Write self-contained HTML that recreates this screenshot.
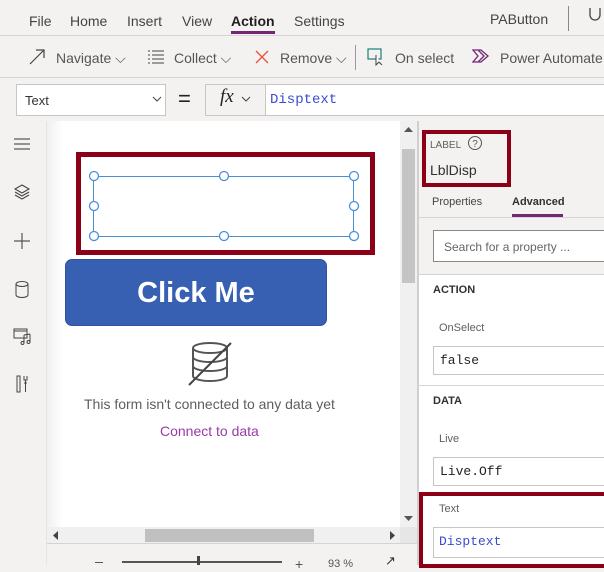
<!DOCTYPE html>
<html><head><style>
*{margin:0;padding:0;box-sizing:border-box}
body{width:604px;height:565px;overflow:hidden;background:#f3f2f1;font-family:"Liberation Sans",sans-serif;position:relative;color:#323130}
.a{position:absolute}
.t{font-size:14px;white-space:nowrap}
.mono{font-family:"Liberation Mono",monospace;font-size:13px}
</style></head><body>
<!-- menu -->
<div class="a" style="left:0;top:0;width:604px;height:36px;background:#f3f2f1;border-bottom:1px solid #d6d4d2"></div>
<div class="a t" style="left:29px;top:13px;color:#444">File</div>
<div class="a t" style="left:70px;top:13px;color:#444">Home</div>
<div class="a t" style="left:127px;top:13px;color:#444">Insert</div>
<div class="a t" style="left:182px;top:13px;color:#444">View</div>
<div class="a t" style="left:231px;top:13px;font-weight:bold;color:#201f1e">Action</div>
<div class="a" style="left:231px;top:31px;width:44px;height:3px;background:#742774"></div>
<div class="a t" style="left:294px;top:13px;color:#444">Settings</div>
<div class="a t" style="left:490px;top:11px;color:#444">PAButton</div>
<div class="a" style="left:568px;top:6px;width:1px;height:25px;background:#888"></div>
<svg class="a" style="left:586px;top:6px" width="20" height="24"><path d="M4 2 v7 a5 5 0 0 0 10 0 v-7" fill="none" stroke="#444" stroke-width="1.3"/></svg>
<!-- toolbar -->
<div class="a" style="left:0;top:37px;width:604px;height:41px;background:#f3f2f1;border-bottom:1px solid #d6d4d2"></div>
<svg class="a" style="left:28px;top:48px" width="18" height="18"><path d="M2 16 L16 2 M8 2 H16 V10" fill="none" stroke="#444" stroke-width="1.2"/></svg>
<div class="a t" style="left:56px;top:50px;color:#555">Navigate ⌵</div>
<svg class="a" style="left:148px;top:50px" width="16" height="14"><path d="M0 1h2M4 1h12M0 5h2M4 5h12M0 9h2M4 9h12M0 13h2M4 13h12" stroke="#444" stroke-width="1"/></svg>
<div class="a t" style="left:174px;top:50px;color:#555">Collect ⌵</div>
<svg class="a" style="left:255px;top:50px" width="14" height="14"><path d="M1 1L13 13M13 1L1 13" stroke="#e8523a" stroke-width="1.3"/></svg>
<div class="a t" style="left:280px;top:50px;color:#555">Remove ⌵</div>
<div class="a" style="left:355px;top:45px;width:1px;height:25px;background:#999"></div>
<svg class="a" style="left:367px;top:48px" width="20" height="18"><rect x="1" y="1" width="13" height="10" fill="none" stroke="#1a7f7a" stroke-width="1.2"/><path d="M9 7 l0 10 l3-3 l3 3" fill="#fff" stroke="#444" stroke-width="1"/></svg>
<div class="a t" style="left:395px;top:50px;color:#555">On select</div>
<svg class="a" style="left:472px;top:49px" width="18" height="14"><path d="M1 1h8l7 6-7 6H1l5-6z M6 1l6 6-6 6" fill="none" stroke="#742774" stroke-width="1.3"/></svg>
<div class="a t" style="left:500px;top:50px;color:#555">Power Automate</div>
<!-- formula bar -->
<div class="a" style="left:16px;top:84px;width:150px;height:32px;background:#fff;border:1px solid #c8c6c4"></div>
<div class="a" style="left:25px;top:93px;font-size:13px;color:#333">Text</div>
<svg class="a" style="left:152px;top:96px" width="10" height="6"><path d="M1 1l4 4 4-4" fill="none" stroke="#444"/></svg>
<div class="a" style="left:178px;top:86px;font-size:22px;color:#222">=</div>
<div class="a" style="left:205px;top:84px;width:61px;height:32px;background:#f3f2f1;border:1px solid #c8c6c4"></div>
<div class="a" style="left:220px;top:86px;font-family:'Liberation Serif',serif;font-style:italic;font-size:19px;color:#222">fx</div>
<svg class="a" style="left:241px;top:96px" width="10" height="6"><path d="M1 1l4 4 4-4" fill="none" stroke="#444"/></svg>
<div class="a" style="left:265px;top:84px;width:345px;height:32px;background:#fff;border:1px solid #c8c6c4"></div>
<div class="a mono" style="left:270px;top:92px;color:#3b4bd0;font-size:14px">Disptext</div>
<!-- left rail -->
<div class="a" style="left:0;top:121px;width:47px;height:444px;background:#f3f2f1;border-right:1px solid #e6e4e2"></div>
<svg class="a" style="left:12px;top:138px" width="20" height="12"><path d="M2 1h16M2 6h16M2 11h16" stroke="#333" stroke-width="1"/></svg>
<svg class="a" style="left:13px;top:183px" width="18" height="18"><path d="M9 2l7 4-7 4-7-4z M2 9l7 4 7-4 M2 12l7 4 7-4" fill="none" stroke="#444" stroke-width="1.1"/></svg>
<svg class="a" style="left:13px;top:232px" width="18" height="18"><path d="M9 1v16M1 9h16" stroke="#555" stroke-width="1.2"/></svg>
<svg class="a" style="left:14px;top:280px" width="16" height="20"><ellipse cx="8" cy="4" rx="6" ry="2.5" fill="none" stroke="#444"/><path d="M2 4v11a6 2.5 0 0 0 12 0V4" fill="none" stroke="#444"/></svg>
<svg class="a" style="left:13px;top:328px" width="20" height="18"><rect x="1" y="1" width="13" height="9" fill="none" stroke="#444"/><path d="M1 3h13M11 7v8M17 6v8M11 7l6-1" fill="none" stroke="#444"/><circle cx="9.5" cy="15" r="1.5" fill="none" stroke="#444"/><circle cx="15.5" cy="14" r="1.5" fill="none" stroke="#444"/></svg>
<svg class="a" style="left:15px;top:375px" width="14" height="18"><path d="M2 1v16h3V1zM9 1v4h3V1M9 8h3M10.5 5v12" fill="none" stroke="#444"/></svg>
<!-- canvas -->
<div class="a" style="left:47px;top:121px;width:353px;height:406px;background:#fff"></div>
<div class="a" style="left:47px;top:121px;width:16px;height:406px;background:linear-gradient(90deg,#f0f0f0,#fff)"></div>
<div class="a" style="left:76px;top:152px;width:299px;height:103px;border:5px solid #8b0016"></div>
<div class="a" style="left:93px;top:176px;width:261px;height:61px;border:1.5px solid #4a90d9"></div>
<svg class="a" style="left:86px;top:169px" width="276" height="76">
<g fill="#fff" stroke="#4a90d9" stroke-width="1.3">
<circle cx="8" cy="7" r="4.5"/><circle cx="138" cy="7" r="4.5"/><circle cx="268" cy="7" r="4.5"/>
<circle cx="8" cy="37" r="4.5"/><circle cx="268" cy="37" r="4.5"/>
<circle cx="8" cy="67" r="4.5"/><circle cx="138" cy="67" r="4.5"/><circle cx="268" cy="67" r="4.5"/></g></svg>
<div class="a" style="left:65px;top:259px;width:262px;height:67px;background:#3860b2;border-radius:7px;border:1px solid #2f52a0;color:#fff;font-weight:bold;font-size:29px;text-align:center;line-height:66px">Click Me</div>
<svg class="a" style="left:186px;top:340px" width="48" height="48"><g fill="none" stroke="#555" stroke-width="2"><ellipse cx="24" cy="8" rx="17" ry="5"/><path d="M7 8v28a17 5 0 0 0 34 0V8M7 17a17 5 0 0 0 34 0M7 26a17 5 0 0 0 34 0"/><path d="M3 45L45 3" stroke="#444"/></g></svg>
<div class="a t" style="left:84px;top:396px;color:#605e5c">This form isn't connected to any data yet</div>
<div class="a t" style="left:160px;top:423px;color:#9b3aa8">Connect to data</div>
<!-- v scrollbar -->
<div class="a" style="left:400px;top:121px;width:17px;height:406px;background:#f0f0f0"></div>
<div class="a" style="left:402px;top:149px;width:13px;height:134px;background:#c4c4c4"></div>
<svg class="a" style="left:404px;top:127px" width="9" height="6"><path d="M0 5L4.5 0 9 5z" fill="#555"/></svg>
<svg class="a" style="left:404px;top:516px" width="9" height="6"><path d="M0 0L4.5 5 9 0z" fill="#555"/></svg>
<!-- h scrollbar -->
<div class="a" style="left:47px;top:527px;width:353px;height:17px;background:#f0f0f0"></div>
<div class="a" style="left:145px;top:529px;width:169px;height:13px;background:#c0c0c0"></div>
<svg class="a" style="left:53px;top:531px" width="6" height="9"><path d="M5 0L0 4.5 5 9z" fill="#444"/></svg>
<svg class="a" style="left:390px;top:531px" width="6" height="9"><path d="M0 0L5 4.5 0 9z" fill="#444"/></svg>
<div class="a" style="left:400px;top:527px;width:17px;height:17px;background:#e6e6e6"></div>
<div class="a" style="left:47px;top:543px;width:370px;height:22px;background:#f3f2f1;border-top:1px solid #d6d4d2"></div>
<div class="a" style="left:95px;top:562px;width:8px;height:1px;background:#555"></div>
<div class="a" style="left:122px;top:561px;width:160px;height:2px;background:#555"></div>
<div class="a" style="left:197px;top:556px;width:3px;height:9px;background:#444"></div>
<div class="a" style="left:295px;top:556px;font-size:14px;color:#555">+</div>
<div class="a" style="left:328px;top:558px;font-size:11px;color:#555">93 %</div>
<div class="a" style="left:385px;top:553px;font-size:13px;color:#333">↗</div>
<!-- right panel -->
<div class="a" style="left:417px;top:121px;width:187px;height:444px;background:#fff;border-left:2px solid #d0d0d0"></div>
<div class="a" style="left:419px;top:121px;width:185px;height:154px;background:#f3f2f1;border-bottom:1px solid #d6d4d2"></div>
<div class="a" style="left:422px;top:130px;width:89px;height:57px;border:4px solid #8b0016"></div>
<div class="a" style="left:430px;top:140px;font-size:10px;color:#605e5c">LABEL</div>
<svg class="a" style="left:467px;top:135px" width="16" height="16"><circle cx="8" cy="8" r="6.5" fill="none" stroke="#555"/><text x="8" y="12" font-size="10" text-anchor="middle" fill="#555" font-family="Liberation Sans">?</text></svg>
<div class="a" style="left:430px;top:162px;font-size:14px;color:#323130">LblDisp</div>
<div class="a" style="left:432px;top:196px;font-size:11px;color:#444">Properties</div>
<div class="a" style="left:512px;top:196px;font-size:11px;font-weight:bold;color:#323130">Advanced</div>
<div class="a" style="left:512px;top:214px;width:51px;height:3px;background:#742774"></div>
<div class="a" style="left:419px;top:217px;width:185px;height:1px;background:#d6d4d2"></div>
<div class="a" style="left:433px;top:230px;width:175px;height:32px;background:#fff;border:1px solid #8a8886"></div>
<div class="a" style="left:444px;top:240px;font-size:12px;color:#666">Search for a property ...</div>
<div class="a" style="left:433px;top:284px;font-size:11px;font-weight:bold;color:#323130">ACTION</div>
<div class="a" style="left:439px;top:322px;font-size:11px;color:#605e5c">OnSelect</div>
<div class="a" style="left:433px;top:346px;width:175px;height:29px;border:1px solid #c8c6c4"></div>
<div class="a mono" style="left:440px;top:353px;color:#222">false</div>
<div class="a" style="left:419px;top:385px;width:185px;height:1px;background:#d6d4d2"></div>
<div class="a" style="left:433px;top:395px;font-size:11px;font-weight:bold;color:#323130">DATA</div>
<div class="a" style="left:439px;top:433px;font-size:11px;color:#605e5c">Live</div>
<div class="a" style="left:433px;top:457px;width:175px;height:29px;border:1px solid #c8c6c4"></div>
<div class="a mono" style="left:440px;top:464px;color:#222">Live.Off</div>
<div class="a" style="left:419px;top:492px;width:190px;height:76px;border:4px solid #8b0016"></div>
<div class="a" style="left:439px;top:503px;font-size:11px;color:#605e5c">Text</div>
<div class="a" style="left:433px;top:527px;width:175px;height:31px;border:1px solid #c8c6c4"></div>
<div class="a mono" style="left:439px;top:534px;color:#3b4bd0">Disptext</div>
</body></html>
